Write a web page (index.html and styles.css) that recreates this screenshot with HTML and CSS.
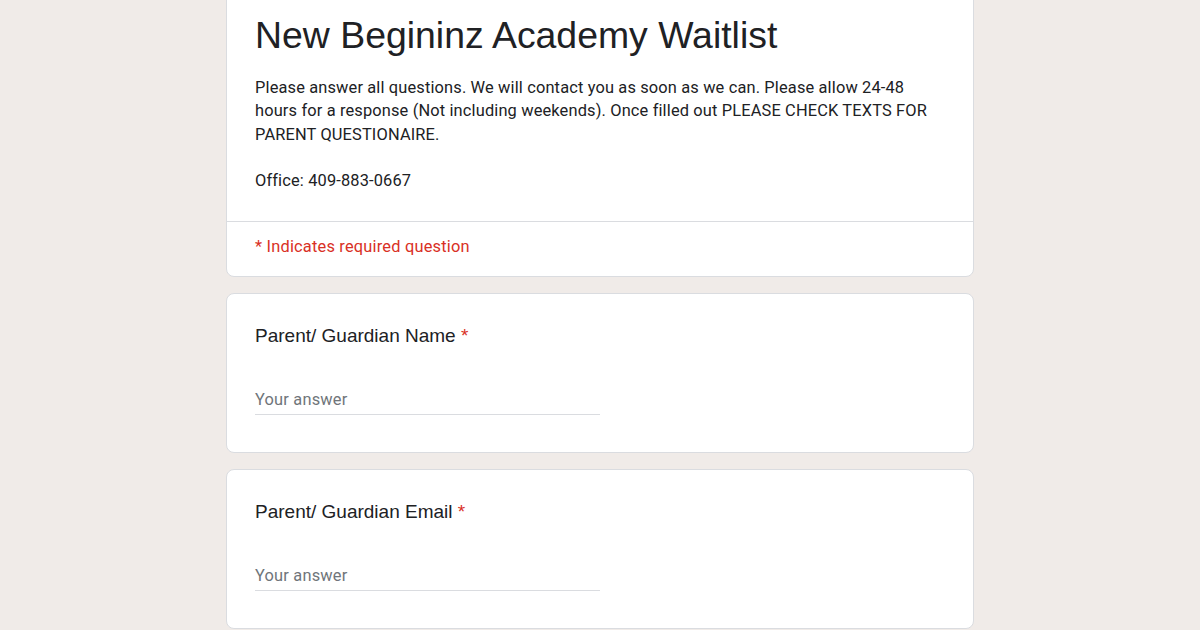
FILE: index.html
```html
<!DOCTYPE html>
<html>
<head>
<meta charset="utf-8">
<title>New Begininz Academy Waitlist</title>
<link rel="stylesheet" href="styles.css">
</head>
<body>
<div class="form_wrap">
    <div class="card header_card">
        <div class="header_top">
            <h1 class="form_title">New Begininz Academy Waitlist</h1>
            <div class="form_desc">
                Please answer all questions. We will contact you as soon as we can. Please allow 24-48<br>
                hours for a response (Not including weekends). Once filled out PLEASE CHECK TEXTS FOR<br>
                PARENT QUESTIONAIRE.<br>
                <br>
                Office: 409-883-0667
            </div>
        </div>
        <div class="required_note">* Indicates required question</div>
    </div>

    <div class="card question">
        <div class="q_title">Parent/ Guardian Name <span class="star">*</span></div>
        <div class="answer">Your answer</div>
    </div>

    <div class="card question">
        <div class="q_title">Parent/ Guardian Email <span class="star">*</span></div>
        <div class="answer">Your answer</div>
    </div>
</div>
</body>
</html>
```

FILE: styles.css
```css
body {
background:#f0ebe8;
margin:0;
font-family:Roboto, "Liberation Sans", Arial, sans-serif;
color:#202124;
}

.form_wrap {
width:748px;
margin:-16px auto 0 auto;
display:flex;
flex-direction:column;
gap:16px;
}

.card {
background:#fff;
border:1px solid #dadce0;
border-radius:8px;
}

.header_top {
padding:28px 28px 29px 28px;
border-bottom:1px solid #dadce0;
}

.form_title {
font-family:"Liberation Sans", Arial, sans-serif;
font-weight:normal;
font-size:37.4px;
line-height:45px;
margin:0 0 18px 0;
color:#202124;
}

.form_desc {
font-size:16.4px;
line-height:23.3px;
letter-spacing:0.15px;
}

.required_note {
color:#d93025;
font-size:16.4px;
line-height:23.5px;
letter-spacing:0.2px;
padding:13px 28px 17px 28px;
}

.question {
padding:28px 28px 37px 28px;
}

.q_title {
font-family:"Liberation Sans", Arial, sans-serif;
font-size:19px;
line-height:28px;
margin-bottom:39px;
}

.star {
color:#d93025;
}

.answer {
width:345px;
font-size:16.4px;
line-height:22px;
letter-spacing:0.2px;
color:#70757a;
padding-bottom:3px;
border-bottom:1px solid #dadce0;
}
```
